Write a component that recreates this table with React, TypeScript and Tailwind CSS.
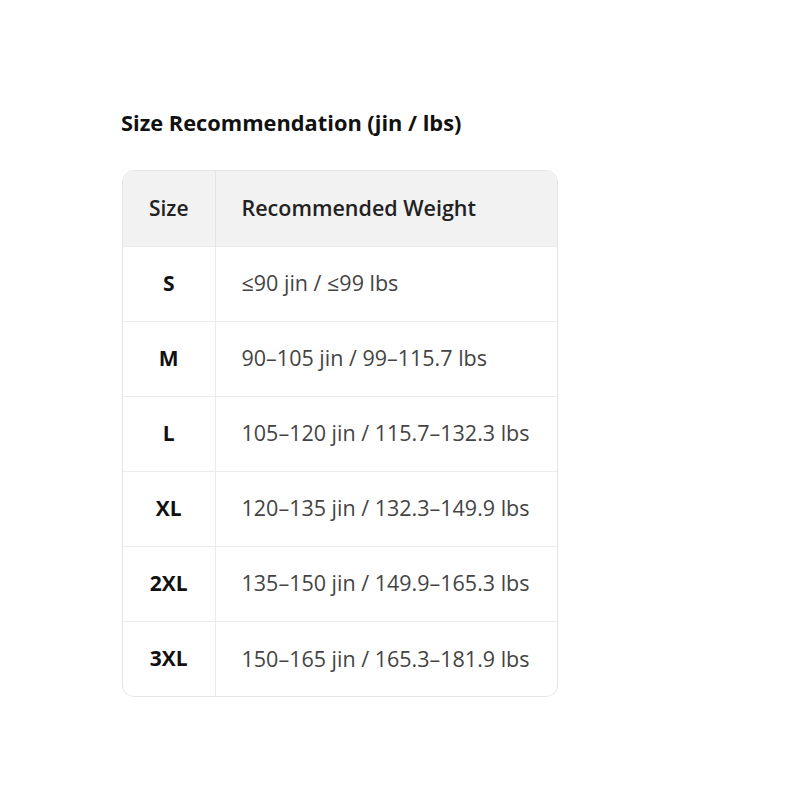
import React from 'react';

const rows: [string, string][] = [
  ['S', '≤90 jin / ≤99 lbs'],
  ['M', '90–105 jin / 99–115.7 lbs'],
  ['L', '105–120 jin / 115.7–132.3 lbs'],
  ['XL', '120–135 jin / 132.3–149.9 lbs'],
  ['2XL', '135–150 jin / 149.9–165.3 lbs'],
  ['3XL', '150–165 jin / 165.3–181.9 lbs'],
];

export default function App() {
  return (
    <div
      className="min-h-[800px] bg-white pt-[107px] pl-[122px]"
      style={{ fontFamily: '"Open Sans", "Noto Sans", sans-serif' }}
    >
      <h2 className="-ml-px text-[21.8px] leading-[32px] font-bold text-[#111]">
        Size Recommendation (jin / lbs)
      </h2>
      <div className="mt-[31px] w-[436px] overflow-hidden rounded-[12px] border border-[#e6e6e6]">
        <table className="w-full border-collapse text-left">
          <thead>
            <tr className="h-[75px] bg-[#f2f2f2]">
              <th className="w-[92px] border-r border-[#e3e3e3] text-center text-[21px] font-semibold text-[#222]">
                Size
              </th>
              <th className="pl-[26px] text-[21.5px] font-semibold text-[#222]">
                Recommended Weight
              </th>
            </tr>
          </thead>
          <tbody>
            {rows.map(([size, weight]) => (
              <tr key={size} className="h-[75px] border-t border-[#ececec]">
                <td className="border-r border-[#ececec] text-center text-[21px] font-bold text-[#111]">
                  {size}
                </td>
                <td className="pl-[26px] text-[21.5px] text-[#444]">{weight}</td>
              </tr>
            ))}
          </tbody>
        </table>
      </div>
    </div>
  );
}
